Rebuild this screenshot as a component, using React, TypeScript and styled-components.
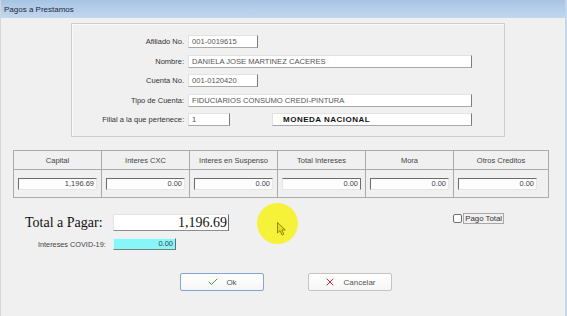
import React from "react"
import styled, { createGlobalStyle } from "styled-components"
import { Check, X } from "lucide-react"

const GlobalStyle = createGlobalStyle`
  html, body {
    margin: 0;
    padding: 0;
    background: #f0f0f0;
  }
  body {
    font-family: "Liberation Sans", Arial, sans-serif;
  }
`

const Window = styled.div`
  position: relative;
  width: 567px;
  height: 316px;
  box-sizing: border-box;
  background: #f0f0f0;
  border-left: 1px solid #d6d6d6;
  border-right: 2px solid #c2d6ed;
  overflow: hidden;
  display: flex;
  flex-direction: column;
`

const TitleBar = styled.div`
  height: 18px;
  flex: none;
  display: flex;
  align-items: center;
  padding-left: 3px;
  background: linear-gradient(#a8c4e4, #c3d7ee);
  color: #1c2a40;
  font: 8px "Liberation Sans", Arial, sans-serif;
`

const Body = styled.div`
  flex: 1;
  display: flex;
  flex-direction: column;
  padding-top: 5px;
`

const InfoPanel = styled.div`
  margin-left: 70px;
  width: 434px;
  height: 114px;
  box-sizing: border-box;
  border: 1px solid #cdcdcd;
  box-shadow: inset 1px 1px 0 #fafafa;
  padding-top: 11px;
`

const InfoGrid = styled.div`
  display: grid;
  grid-template-columns: 112px auto;
  grid-auto-rows: 13px;
  column-gap: 4px;
  row-gap: 6.5px;
`

const InfoLabel = styled.div`
  text-align: right;
  font-size: 7.5px;
  line-height: 13px;
  color: #333;
`

const InfoCell = styled.div`
  display: flex;
  align-items: center;
`

const Field = styled.div<{ $w: number; $bold?: boolean; $gap?: number }>`
  width: ${p => p.$w}px;
  height: 13px;
  box-sizing: border-box;
  margin-left: ${p => p.$gap || 0}px;
  padding-left: ${p => (p.$bold ? 10 : 3)}px;
  background: #fff;
  border: 1px solid;
  border-color: #e2e2e2 #7c7c7c #a8a8a8 #e2e2e2;
  font-size: ${p => (p.$bold ? 8 : 7.6)}px;
  line-height: 11px;
  white-space: nowrap;
  overflow: hidden;
  color: ${p => (p.$bold ? "#111" : "#555")};
  font-weight: ${p => (p.$bold ? 700 : 400)};
  letter-spacing: ${p => (p.$bold ? "0.5px" : "0")};
`

const AmountTable = styled.div`
  margin: 13px 0 0 12px;
  display: grid;
  grid-template-columns: repeat(5, 88px) 95px;
  grid-template-rows: 19px 28px;
  width: max-content;
  border-left: 1px solid #ababab;
  border-top: 1px solid #ababab;
`

const HeadCell = styled.div`
  display: flex;
  align-items: center;
  justify-content: center;
  border-right: 1px solid #ababab;
  border-bottom: 1px solid #ababab;
  font-size: 7.5px;
  color: #444;
`

const ValueCell = styled.div`
  display: flex;
  align-items: center;
  padding-left: 4px;
  border-right: 1px solid #ababab;
  border-bottom: 1px solid #ababab;
`

const AmountBox = styled.div<{ $flat?: boolean }>`
  width: 79px;
  height: 12px;
  box-sizing: border-box;
  background: #fdfdfd;
  border: 1px solid;
  border-color: ${p =>
    p.$flat ? "#6c6c6c #6c6c6c #e6e6e6 #e6e6e6" : "#6c6c6c #e6e6e6 #e6e6e6 #6c6c6c"};
  text-align: right;
  padding-right: 2px;
  font-size: 7.5px;
  line-height: 10px;
  color: #444;
`

const TotalRow = styled.div`
  margin-top: 16px;
  display: flex;
  align-items: center;
  padding: 0 61px 0 24px;
`

const TotalLabel = styled.div`
  width: 88px;
  font: 14px "Liberation Serif", "Times New Roman", serif;
  color: #111;
`

const TotalBox = styled.div`
  width: 116px;
  height: 17px;
  box-sizing: border-box;
  background: #fff;
  border: 1px solid;
  border-color: #e4e4e4 #6c6c6c #8c8c8c #e4e4e4;
  text-align: right;
  padding-right: 1px;
  font: 14px/15px "Liberation Serif", "Times New Roman", serif;
  color: #111;
`

const CheckWrap = styled.label`
  margin-left: auto;
  align-self: flex-start;
  margin-top: -1px;
  display: flex;
  align-items: center;
  gap: 1px;
`

const CheckSquare = styled.span`
  width: 9px;
  height: 9px;
  box-sizing: border-box;
  border: 1px solid #6e6e6e;
  border-radius: 2px;
  background: #fff;
`

const CheckText = styled.span`
  height: 11px;
  box-sizing: border-box;
  border: 1px solid #a8a8a8;
  padding: 0 1px;
  font-size: 7.8px;
  line-height: 9px;
  color: #333;
`

const CovidRow = styled.div`
  margin-top: 7px;
  display: flex;
  align-items: center;
  padding-left: 37px;
`

const CovidLabel = styled.div`
  width: 75px;
  font-size: 7.3px;
  color: #444;
`

const CovidBox = styled.div`
  width: 63px;
  height: 12px;
  box-sizing: border-box;
  background: #86f6f9;
  border: 1px solid;
  border-color: #d8f8f8 #6c6c6c #7c7c7c #d8f8f8;
  text-align: right;
  padding-right: 2px;
  font-size: 7.5px;
  line-height: 10px;
  color: #444;
`

const ButtonRow = styled.div`
  margin-top: 23px;
  display: flex;
  gap: 44px;
  padding-left: 179px;
`

const Button = styled.button<{ $default?: boolean }>`
  width: 84px;
  height: 18px;
  box-sizing: border-box;
  display: flex;
  align-items: center;
  justify-content: center;
  gap: 7px;
  padding: 0;
  border: 1px solid ${p => (p.$default ? "#7fa6d4" : "#c4c4c4")};
  border-radius: 2px;
  background: linear-gradient(#ffffff, #f6f6f6);
  font: 8px "Liberation Sans", Arial, sans-serif;
  color: #555;
`

const Highlight = styled.div`
  position: absolute;
  left: 256px;
  top: 203px;
  width: 41px;
  height: 41px;
  border-radius: 50%;
  background: #f6f23a;
`

const Pointer = styled.svg`
  position: absolute;
  left: 20px;
  top: 19px;
`

const heads = ["Capital", "Interes CXC", "Interes en Suspenso", "Total Intereses", "Mora", "Otros Creditos"]
const values = ["1,196.69", "0.00", "0.00", "0.00", "0.00", "0.00"]

export default function App() {
  return (
    <>
      <GlobalStyle />
      <Window>
        <TitleBar>Pagos a Prestamos</TitleBar>
        <Body>
          <InfoPanel>
            <InfoGrid>
              <InfoLabel>Afiliado No.</InfoLabel>
              <InfoCell><Field $w={70}>001-0019615</Field></InfoCell>
              <InfoLabel>Nombre:</InfoLabel>
              <InfoCell><Field $w={284}>DANIELA JOSE MARTINEZ CACERES</Field></InfoCell>
              <InfoLabel>Cuenta No.</InfoLabel>
              <InfoCell><Field $w={70}>001-0120420</Field></InfoCell>
              <InfoLabel>Tipo de Cuenta:</InfoLabel>
              <InfoCell><Field $w={284}>FIDUCIARIOS CONSUMO CREDI-PINTURA</Field></InfoCell>
              <InfoLabel>Filial a la que pertenece:</InfoLabel>
              <InfoCell>
                <Field $w={42}>1</Field>
                <Field $w={200} $gap={42} $bold>MONEDA NACIONAL</Field>
              </InfoCell>
            </InfoGrid>
          </InfoPanel>

          <AmountTable>
            {heads.map(h => <HeadCell key={h}>{h}</HeadCell>)}
            {values.map((v, i) => (
              <ValueCell key={i}>
                <AmountBox $flat={i === 3}>{v}</AmountBox>
              </ValueCell>
            ))}
          </AmountTable>

          <TotalRow>
            <TotalLabel>Total a Pagar:</TotalLabel>
            <TotalBox>1,196.69</TotalBox>
            <CheckWrap>
              <CheckSquare />
              <CheckText>Pago Total</CheckText>
            </CheckWrap>
          </TotalRow>

          <CovidRow>
            <CovidLabel>Intereses COVID-19:</CovidLabel>
            <CovidBox>0.00</CovidBox>
          </CovidRow>

          <ButtonRow>
            <Button $default>
              <Check size={12} color="#2fa83a" strokeWidth={2} />
              Ok
            </Button>
            <Button>
              <X size={12} color="#d32a2a" strokeWidth={2} />
              Cancelar
            </Button>
          </ButtonRow>
        </Body>

        <Highlight>
          <Pointer width="9" height="14" viewBox="0 0 9 14">
            <path d="M0.5 0.5 L0.5 11 L3 8.6 L5 13 L6.8 12.2 L4.9 7.9 L8.3 7.9 Z" fill="#e8df1c" stroke="#77730a" strokeWidth="0.8" />
          </Pointer>
        </Highlight>
      </Window>
    </>
  )
}
